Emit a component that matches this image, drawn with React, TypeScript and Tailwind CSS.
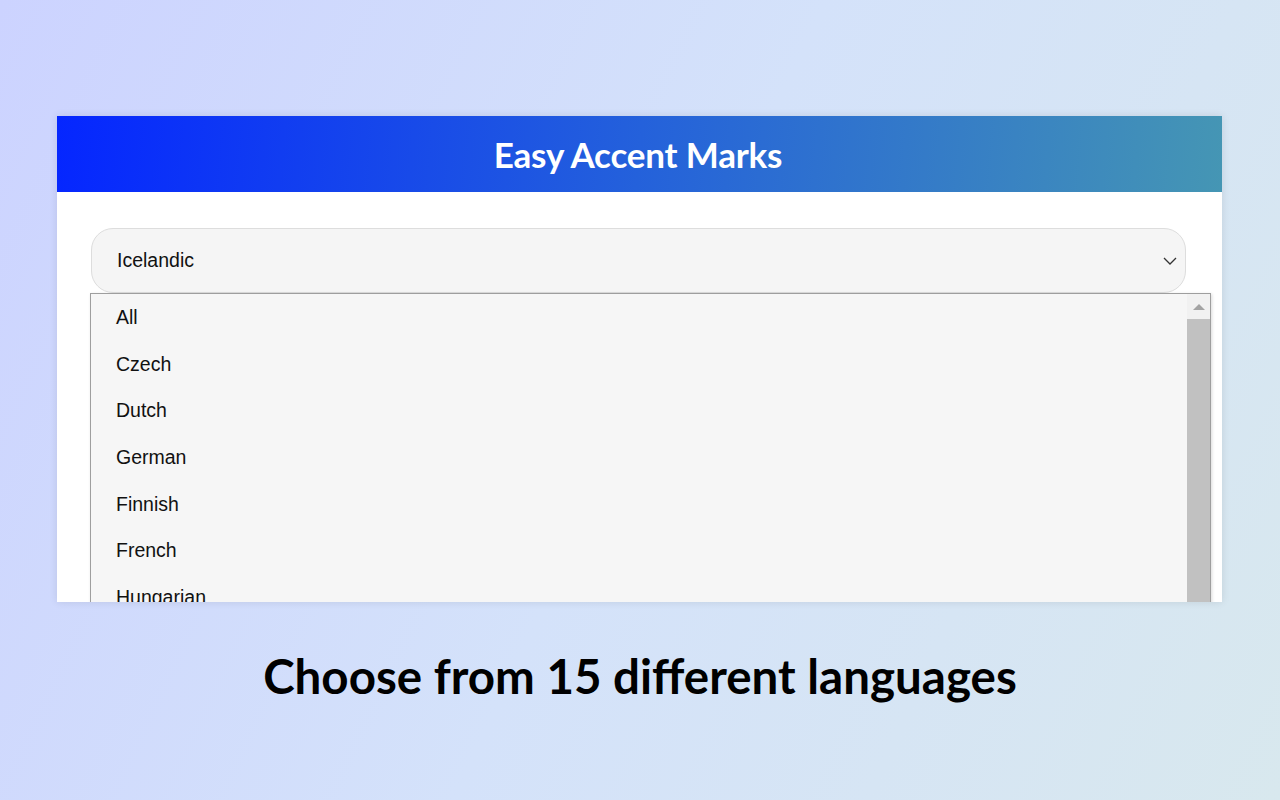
import React from 'react';

const languages = ['All', 'Czech', 'Dutch', 'German', 'Finnish', 'French', 'Hungarian'];

const App: React.FC = () => {
  return (
    <div className="min-h-screen w-full bg-[linear-gradient(115deg,#ccd3ff_0%,#d4e2fa_50%,#d8e8ee_100%)] pt-[116px] font-['Lato',sans-serif]">
      {/* Popup card */}
      <div className="relative ml-[57px] h-[486px] w-[1165px] overflow-hidden bg-white shadow-[0_0_8px_rgba(0,0,0,0.10)]">
        <div className="flex h-[76px] items-center justify-center bg-[linear-gradient(95deg,#0526ff_0%,#2461db_50%,#4596b4_100%)] pr-[3px]">
          <h1 className="text-[35px] font-bold tracking-[-0.2px] text-white">Easy Accent Marks</h1>
        </div>

        <div className="pl-[34px] pr-[36px] pt-[36px]">
          {/* Select */}
          <div className="flex h-[65px] items-center justify-between rounded-[22px] border-[1.5px] border-[#dddddd] bg-[#f5f5f5] pl-[25px] pr-[8px] font-['Liberation_Sans',Arial,sans-serif]">
            <span className="text-[19.5px] text-[#111]">Icelandic</span>
            <svg width="14" height="8" viewBox="0 0 14 8" fill="none">
              <path d="M1 1l6 6 6-6" stroke="#333" strokeWidth="1.3" />
            </svg>
          </div>
        </div>

        {/* Open option list */}
        <div className="absolute left-[33px] top-[177px] flex h-[330px] w-[1121px] border border-[#9e9e9e] bg-[#f6f6f6] font-['Liberation_Sans',Arial,sans-serif] shadow-[1px_1px_3px_rgba(0,0,0,0.15)]">
          <ul className="flex-1 pl-[25px] pt-[12px]">
            {languages.map((lang) => (
              <li key={lang} className="h-[46.7px] text-[19.5px] leading-[22px] text-[#111]">
                {lang}
              </li>
            ))}
          </ul>
          <div className="flex w-[23px] flex-col">
            <div className="flex h-[25px] items-center justify-center bg-[#f1f1f1]">
              <svg width="12" height="7" viewBox="0 0 12 7">
                <path d="M0 7L6 1l6 6z" fill="#a3a3a3" />
              </svg>
            </div>
            <div className="flex-1 bg-[#c1c1c1]" />
          </div>
        </div>
      </div>

      <p className="mt-[45px] text-center text-[47.5px] font-bold leading-[58px] text-black">
        Choose from 15 different languages
      </p>
    </div>
  );
};

export default App;
